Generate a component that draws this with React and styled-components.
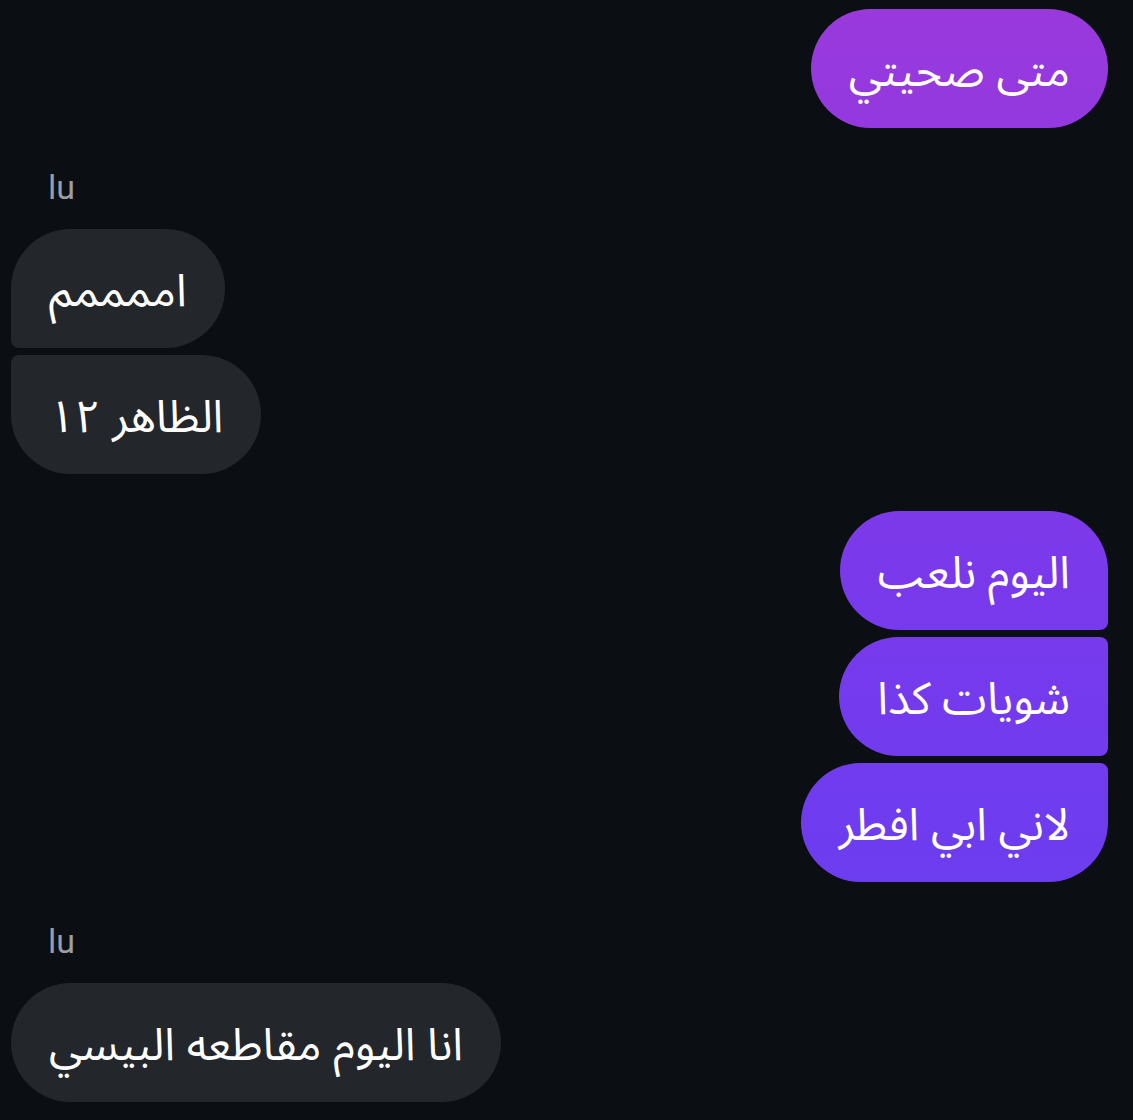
import React from "react";
import styled, { createGlobalStyle } from "styled-components";

const Global = createGlobalStyle`
  html, body { margin: 0; padding: 0; background: #0b0e12; }
  body { font-family: "DejaVu Sans", "Noto Sans", sans-serif; }
`;

const Thread = styled.div`
  display: flex;
  flex-direction: column;
  gap: 37px;
  padding: 9px 25px 18px 11px;
  box-sizing: border-box;
  width: 1133px;
`;

const Group = styled.div`
  display: flex;
  flex-direction: column;
  align-items: ${(p) => (p.$mine ? "flex-end" : "flex-start")};
  gap: 7px;
`;

const Sender = styled.div`
  font-family: Roboto, Inter, "Liberation Sans", sans-serif;
  font-size: 34px;
  line-height: 44px;
  color: #9a9ea6;
  padding-left: 37px;
  margin-bottom: 13px;
`;

const BIG = 60;
const SMALL = 8;

const radius = (mine, pos) => {
  const top = pos === "first" || pos === "single" ? BIG : SMALL;
  const bottom = pos === "last" || pos === "single" ? BIG : SMALL;
  if (mine) return `${BIG}px ${top}px ${bottom}px ${BIG}px`;
  return `${top}px ${BIG}px ${BIG}px ${bottom}px`;
};

const Bubble = styled.div`
  box-sizing: border-box;
  height: 119px;
  padding: 6px 38px 0;
  display: flex;
  align-items: center;
  direction: rtl;
  font-family: "Noto Sans Arabic", "DejaVu Sans", "Noto Sans", sans-serif;
  font-size: 45px;
  color: #ffffff;
  white-space: nowrap;
  border-radius: ${(p) => radius(p.$mine, p.$pos)};
  background: ${(p) =>
    p.$mine
      ? "linear-gradient(to bottom, #9a39dc 0px, #7a39eb 560px, #623ff3 1120px) fixed"
      : "#23262b"};
`;

const groups = [
  { mine: true, msgs: ["متى صحيتي"] },
  { mine: false, sender: "lu", msgs: ["اممممم", "الظاهر ١٢"] },
  { mine: true, msgs: ["اليوم نلعب", "شويات كذا", "لاني ابي افطر"] },
  { mine: false, sender: "lu", msgs: ["انا اليوم مقاطعه البيسي"] },
];

const posOf = (i, n) =>
  n === 1 ? "single" : i === 0 ? "first" : i === n - 1 ? "last" : "middle";

export default function App() {
  return (
    <>
      <Global />
      <Thread>
        {groups.map((g, gi) => (
          <Group key={gi} $mine={g.mine}>
            {g.sender && <Sender>{g.sender}</Sender>}
            {g.msgs.map((m, i) => (
              <Bubble key={i} $mine={g.mine} $pos={posOf(i, g.msgs.length)}>
                {m}
              </Bubble>
            ))}
          </Group>
        ))}
      </Thread>
    </>
  );
}
